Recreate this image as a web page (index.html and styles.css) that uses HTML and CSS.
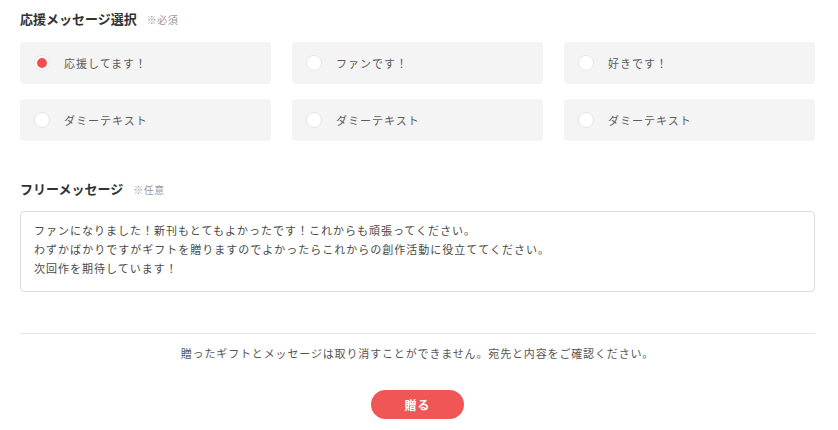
FILE: index.html
```html
<!DOCTYPE html>
<html lang="ja">
<head>
<meta charset="utf-8">
<link rel="stylesheet" href="styles.css">
</head>
<body>
<div class="page">
  <section class="block">
    <h2 class="heading">応援メッセージ選択<span class="note">※必須</span></h2>
    <div class="choices">
      <label class="choice"><span class="radio checked"></span><span class="label">応援してます！</span></label>
      <label class="choice"><span class="radio"></span><span class="label">ファンです！</span></label>
      <label class="choice"><span class="radio"></span><span class="label">好きです！</span></label>
      <label class="choice"><span class="radio"></span><span class="label">ダミーテキスト</span></label>
      <label class="choice"><span class="radio"></span><span class="label">ダミーテキスト</span></label>
      <label class="choice"><span class="radio"></span><span class="label">ダミーテキスト</span></label>
    </div>
  </section>
  <section class="block free">
    <h2 class="heading">フリーメッセージ<span class="note">※任意</span></h2>
    <div class="message">ファンになりました！新刊もとてもよかったです！これからも頑張ってください。<br>わずかばかりですがギフトを贈りますのでよかったらこれからの創作活動に役立ててください。<br>次回作を期待しています！</div>
  </section>
  <hr class="rule">
  <p class="caution">贈ったギフトとメッセージは取り消すことができません。宛先と内容をご確認ください。</p>
  <div class="actions"><button class="send">贈る</button></div>
</div>
</body>
</html>
```
FILE: styles.css
```css
* { box-sizing: border-box; }
body {
  margin: 0;
  background: #fff;
  font-family: "Noto Sans CJK JP", "Noto Sans", sans-serif;
  color: #333;
}
.page {
  padding: 10px 23px 0 20px;
}
.heading {
  margin: 0 0 13px;
  font-size: 13px;
  line-height: 18px;
  font-weight: 700;
  color: #333;
}
.note {
  margin-left: 10px;
  font-size: 10px;
  font-weight: 400;
  color: #999;
  letter-spacing: 0.5px;
}
.choices {
  display: grid;
  grid-template-columns: repeat(3, 1fr);
  gap: 15px 21px;
}
.choice {
  display: flex;
  align-items: center;
  height: 42px;
  padding: 0 14px;
  background: #f4f4f4;
  border-radius: 4px;
}
.radio {
  width: 16px;
  height: 16px;
  border-radius: 50%;
  background: #fff;
  border: 1px solid #e6e6e6;
  margin-right: 14px;
  display: flex;
  align-items: center;
  justify-content: center;
  flex: none;
}
.radio.checked::after {
  content: "";
  width: 10px;
  height: 10px;
  border-radius: 50%;
  background: #ef4f52;
}
.label {
  font-size: 11px;
  letter-spacing: 1px;
  color: #5a5a5a;
}
.free {
  margin-top: 39px;
}
.free .heading {
  margin-bottom: 12px;
}
.message {
  height: 81px;
  border: 1px solid #dcdcdc;
  border-radius: 4px;
  padding: 9px 13px;
  font-size: 11px;
  line-height: 19px;
  letter-spacing: 1px;
  color: #4a4a4a;
}
.rule {
  margin: 41px 0 0;
  border: 0;
  border-top: 1px solid #e6e6e6;
}
.caution {
  margin: 10px 0 0;
  text-align: center;
  font-size: 11px;
  line-height: 18px;
  letter-spacing: 0.85px;
  color: #555;
}
.actions {
  display: flex;
  justify-content: center;
  margin-top: 28px;
}
.send {
  width: 93px;
  height: 29px;
  border: 0;
  border-radius: 15px;
  background: #f05656;
  color: #fff;
  font-family: inherit;
  font-size: 12px;
  font-weight: 700;
  letter-spacing: 1px;
}
```
